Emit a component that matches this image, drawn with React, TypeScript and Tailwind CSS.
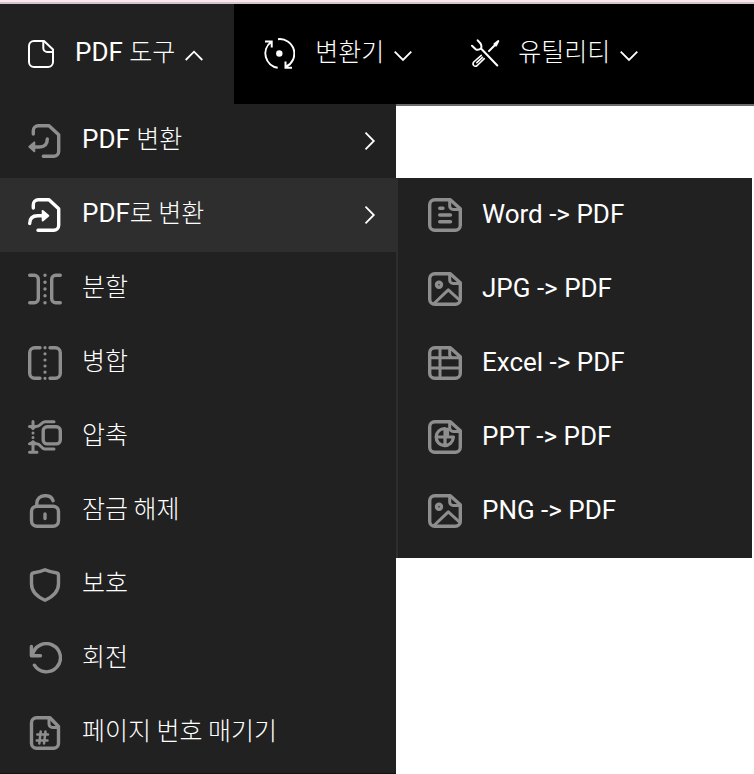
import type { ReactNode } from "react";

interface IconProps {
    children: ReactNode;
}

interface MenuItem {
    label: string;
    icon: ReactNode;
    active?: boolean;
    hasSubmenu?: boolean;
}

function MenuIcon({ children }: IconProps) {
    return (
        <svg
            className="size-[34px] shrink-0"
            viewBox="0 0 34 34"
            fill="none"
            stroke="currentColor"
            strokeWidth="3.4"
            strokeLinecap="round"
            strokeLinejoin="round"
            aria-hidden="true"
        >
            {children}
        </svg>
    );
}

// Sheet of paper with a folded corner, shared by the document icons
function Sheet() {
    return (
        <>
            <path d="M6.7 1.7H22.3L32.3 10.7V27.3a5 5 0 0 1-5 5H6.7a5 5 0 0 1-5-5V6.7a5 5 0 0 1 5-5Z" />
            <path d="M21.7 2V8a3.5 3.5 0 0 0 3.5 3.5H32" strokeWidth="3" />
        </>
    );
}

function PictureIcon() {
    return (
        <MenuIcon>
            <Sheet />
            <circle cx="11" cy="12.7" r="2.5" />
            <path d="M6 31.5 20.3 17.8 32 28.5" strokeWidth="3" />
        </MenuIcon>
    );
}

const menuItems: MenuItem[] = [
    {
        label: "PDF 변환",
        hasSubmenu: true,
        icon: (
            <MenuIcon>
                <path d="M5.3 10V6.7a5 5 0 0 1 5-5H21L30.7 10.7V27.3a5 5 0 0 1-5 5H15.3" />
                <path d="M19.3 15c0 5.5-3 8-8 8H6" />
                <path d="M1.3 22.8 6.3 18.4V27.2Z" fill="currentColor" strokeWidth="2" />
            </MenuIcon>
        ),
    },
    {
        label: "PDF로 변환",
        hasSubmenu: true,
        active: true,
        icon: (
            <MenuIcon>
                <path d="M5.3 10V6.7a5 5 0 0 1 5-5H21L30.7 10.7V27.3a5 5 0 0 1-5 5H10" />
                <path d="M1.7 25.5c0-5.3 3-7.8 8-7.8H15" />
                <path d="M20.3 17.8 14.7 13V22.6Z" fill="currentColor" strokeWidth="2" />
            </MenuIcon>
        ),
    },
    {
        label: "분할",
        icon: (
            <MenuIcon>
                <path d="M1.7 3.3H6.3a4 4 0 0 1 4 4V26.7a4 4 0 0 1-4 4H1.7M32.3 3.3H27.7a4 4 0 0 0-4 4V26.7a4 4 0 0 0 4 4H32.3" />
                <path d="M17 3.3v.01M17 10.3v.01M17 17v.01M17 23.7v.01M17 30.7v.01" />
            </MenuIcon>
        ),
    },
    {
        label: "병합",
        icon: (
            <MenuIcon>
                <path d="M12 1.7H6.7a5 5 0 0 0-5 5V27.3a5 5 0 0 0 5 5H12M22 1.7H27.3a5 5 0 0 1 5 5V27.3a5 5 0 0 1-5 5H22" />
                <path d="M17 1.7v.01M17 7.8v.01M17 14v.01M17 20v.01M17 26.2v.01M17 32.3v.01" strokeWidth="3.2" />
            </MenuIcon>
        ),
    },
    {
        label: "압축",
        icon: (
            <MenuIcon>
                <rect x="15.2" y="6.8" width="17.1" height="17.1" rx="4" />
                <path
                    d="M26 1.7H17c-4 0-4 4.7-8.5 4.7H1.5M5 1.5V7.5M26 29H17c-4 0-4-5.3-8.5-5.3H1.5M5 23V32M1.5 32.3H9"
                    strokeWidth="3"
                />
                <path d="M3 7 5 9 7 7M3 23 5 21.3 7 23" strokeWidth="2.4" />
                <path d="M5 13v.01M5 17.5v.01" strokeWidth="3" />
            </MenuIcon>
        ),
    },
    {
        label: "잠금 해제",
        icon: (
            <MenuIcon>
                <rect x="3.5" y="12.2" width="27" height="20.1" rx="5.5" />
                <path d="M8.8 11.5V9.2a7.5 7.5 0 0 1 7.5-7.5h1.5a7.5 7.5 0 0 1 7.3 5" />
                <path d="M17 20v4.5" />
            </MenuIcon>
        ),
    },
    {
        label: "보호",
        icon: (
            <MenuIcon>
                <path d="M17 1.8c-3 1.4-7 2.6-11 3-1.6.2-2.5 1.2-2.5 2.8v8.2C3.5 24 9.5 29 17 32.2 24.5 29 30.5 24 30.5 15.8V7.6c0-1.6-.9-2.6-2.5-2.8C24 4.4 20 3.2 17 1.8Z" />
            </MenuIcon>
        ),
    },
    {
        label: "회전",
        icon: (
            <MenuIcon>
                <path d="M3.4 4.5V13.7H12.5M4.5 13.2A14.1 14.1 0 1 1 6.4 23.2" />
            </MenuIcon>
        ),
    },
    {
        label: "페이지 번호 매기기",
        icon: (
            <MenuIcon>
                <path d="M8.5 1.7H22L30.5 10.5V27.3a5 5 0 0 1-5 5H8.5a5 5 0 0 1-5-5V6.7a5 5 0 0 1 5-5Z" />
                <path d="M21 2V8a3.5 3.5 0 0 0 3.5 3.5H30.5" strokeWidth="3" />
                <path d="M9.3 18.5H20M8.7 24.5H19.5M12.7 15.5 11.3 27.5M17.5 15.5 16 27.5" strokeWidth="2.5" />
            </MenuIcon>
        ),
    },
];

const convertItems: MenuItem[] = [
    {
        label: "Word -> PDF",
        icon: (
            <MenuIcon>
                <Sheet />
                <path d="M11.7 10.3H15M11.7 17H22.5M11.7 23.7H22.5" />
            </MenuIcon>
        ),
    },
    { label: "JPG -> PDF", icon: <PictureIcon /> },
    {
        label: "Excel -> PDF",
        icon: (
            <MenuIcon>
                <path d="M6.7 1.7H22.3L32.3 10.7V27.3a5 5 0 0 1-5 5H6.7a5 5 0 0 1-5-5V6.7a5 5 0 0 1 5-5Z" />
                <path d="M12 2V32M2 11.8H32M2 22H32M21.7 2V8.5a3.3 3.3 0 0 0 3.3 3.3" strokeWidth="3" />
            </MenuIcon>
        ),
    },
    {
        label: "PPT -> PDF",
        icon: (
            <MenuIcon>
                <Sheet />
                <path d="M17 8.5A8.6 8.6 0 1 0 25.3 17.5M8.5 17H25.5M17 8.5V25.5M19.5 9.2V15" strokeWidth="3.2" />
            </MenuIcon>
        ),
    },
    { label: "PNG -> PDF", icon: <PictureIcon /> },
];

function Chevron({ direction }: { direction: "up" | "down" }) {
    return (
        <svg
            className="mt-1 h-[12px] w-[18px] shrink-0"
            viewBox="0 0 18 12"
            fill="none"
            stroke="currentColor"
            strokeWidth="1.8"
            aria-hidden="true"
        >
            <path d={direction === "up" ? "M.7 10 9 1.7 17.3 10" : "M.7 1.7 9 10 17.3 1.7"} />
        </svg>
    );
}

// Hangul is set smaller and lighter than the Latin letters beside it
function Label({ text }: { text: string }) {
    return (
        <span className="text-[26px] leading-8 whitespace-pre">
            {text.split(/([가-힣]+(?: [가-힣]+)*)/).map((part, i) =>
                /[가-힣]/.test(part) ? (
                    <span key={i} className="font-['Noto_Sans_CJK_KR',sans-serif] text-[25px] leading-8 font-light">
                        {part}
                    </span>
                ) : (
                    part
                )
            )}
        </span>
    );
}

export default function App() {
    return (
        <div className="flex min-h-screen flex-col bg-white font-[Roboto,'Noto_Sans_CJK_KR',sans-serif] text-white">
            {/* Top strip */}
            <div className="h-1 border-b-2 border-[#d3c4ca] bg-[#f9e8ef]"></div>

            {/* Header */}
            <header className="flex h-[100px] bg-black">
                <button className="flex items-center bg-[#212121] pr-[31px] pl-7">
                    <svg
                        className="mr-5 h-[28px] w-[27px]"
                        viewBox="0 0 27 28"
                        fill="none"
                        stroke="currentColor"
                        strokeWidth="2"
                        strokeLinejoin="round"
                        aria-hidden="true"
                    >
                        <path d="M6 1H16L25 9.5V22a5 5 0 0 1-5 5H6a5 5 0 0 1-5-5V6a5 5 0 0 1 5-5Z" />
                        <path d="M15.3 1V8a4 4 0 0 0 4 4H25" />
                    </svg>
                    <span className="mr-2.5 pb-1.5">
                        <Label text="PDF 도구" />
                    </span>
                    <Chevron direction="up" />
                </button>

                <button className="flex items-center pr-7 pl-[29px]">
                    <svg
                        className="mr-5 size-8"
                        viewBox="0 0 32 32"
                        fill="none"
                        stroke="currentColor"
                        strokeWidth="2"
                        aria-hidden="true"
                    >
                        <path d="M14.7 29.8A14.5 14.5 0 0 1 8 4M2 3.5H8.7V9.5" />
                        <path d="M15 1.2A14.5 14.5 0 0 1 23 28.7M22.5 23.5V29.7H29" />
                        <circle cx="16.3" cy="15.5" r="3.2" fill="currentColor" stroke="none" />
                    </svg>
                    <span className="mr-2.5 pb-1.5">
                        <Label text="변환기" />
                    </span>
                    <Chevron direction="down" />
                </button>

                <button className="flex items-center px-[30px]">
                    <svg
                        className="mr-[18px] size-[30px]"
                        viewBox="0 0 30 30"
                        fill="none"
                        stroke="currentColor"
                        strokeWidth="2"
                        strokeLinecap="round"
                        strokeLinejoin="round"
                        aria-hidden="true"
                    >
                        <path d="M7.7 1.3 10.5 4.5Q12 7 11 9.5 8.5 11.5 5.7 10.3L2 6.7M11 9.5 27.3 26.5" />
                        <path d="M19 12 25 6" />
                        <path d="M24.5 5 28.3 2 26 6.5Z" fill="currentColor" />
                        <path d="M11.3 16.3 3.7 23Q2.3 25 3.7 26.5 5.3 28 7.2 26.5L14.3 19.7M6.8 23.6 12.5 18.3" strokeWidth="1.6" />
                    </svg>
                    <span className="mr-2.5 pb-1.5">
                        <Label text="유틸리티" />
                    </span>
                    <Chevron direction="down" />
                </button>
            </header>

            <main className="flex flex-1">
                {/* PDF tools menu */}
                <nav className="w-[396px] shrink-0 border-b border-[#181014] bg-[#212121]">
                    <ul>
                        {menuItems.map((item) => (
                            <li key={item.label}>
                                <a
                                    href="#"
                                    className={
                                        item.active
                                            ? "flex h-[74px] items-center gap-5 bg-[#2e2e2e] pr-5 pl-7"
                                            : "flex h-[74px] items-center gap-5 pr-5 pl-7"
                                    }
                                >
                                    <span className={item.active ? "text-white" : "text-[#8e8e8e]"}>{item.icon}</span>
                                    <span className="flex-1 pb-1.5">
                                        <Label text={item.label} />
                                    </span>
                                    {item.hasSubmenu && (
                                        <svg
                                            className="h-[18px] w-3"
                                            viewBox="0 0 12 18"
                                            fill="none"
                                            stroke="currentColor"
                                            strokeWidth="1.8"
                                            aria-hidden="true"
                                        >
                                            <path d="M1.5 .7 9.8 9 1.5 17.3" />
                                        </svg>
                                    )}
                                </a>
                            </li>
                        ))}
                    </ul>
                </nav>

                {/* Convert to PDF submenu */}
                <div className="flex-1 border-t-2 border-[#6e6a6c] pt-[72px] pr-0.5">
                    <ul className="border-l-2 border-[#2e2e2e] bg-[#212121] pb-2.5">
                        {convertItems.map((item) => (
                            <li key={item.label}>
                                <a href="#" className="flex h-[74px] items-center gap-5 pl-[30px]">
                                    <span className="text-[#8e8e8e]">{item.icon}</span>
                                    <span className="pb-0.5">
                                        <Label text={item.label} />
                                    </span>
                                </a>
                            </li>
                        ))}
                    </ul>
                </div>
            </main>
        </div>
    );
}
